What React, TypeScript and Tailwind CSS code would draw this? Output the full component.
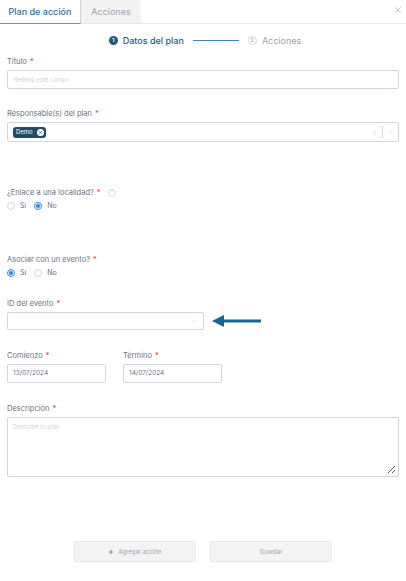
import { ChevronDown, X, Plus } from "lucide-react";

const font = { fontFamily: '"Inter", "Liberation Sans", sans-serif' };

function Label({ text, extra }: { text: string; extra?: React.ReactNode }) {
  return (
    <div className="flex items-center text-[7.5px] text-gray-500 mb-[3px] h-[10px]">
      <span>{text}</span>
      <span className="text-red-500 ml-[3px]">*</span>
      {extra}
    </div>
  );
}

function Radio({ label, checked }: { label: string; checked?: boolean }) {
  return (
    <label className="flex items-center gap-[5px] text-[7px] text-gray-500">
      <span
        className={
          "w-[8px] h-[8px] rounded-full flex items-center justify-center " +
          (checked ? "border border-[#3b8ee8] bg-[#e6f1fd]" : "border border-gray-300")
        }
      >
        {checked && <span className="w-[4px] h-[4px] rounded-full bg-[#2f86e6]" />}
      </span>
      {label}
    </label>
  );
}

export default function App() {
  return (
    <div className="w-[406px] h-[581px] bg-white relative overflow-hidden" style={font}>
      {/* tabs */}
      <div className="flex items-stretch h-[24px] border-b border-gray-200 relative">
        <div className="w-[81px] flex items-center justify-center text-[9px] font-medium text-[#2c6b93] border-r border-gray-300 border-b-[1.5px] border-b-[#5b9cc4] -mb-px">
          Plan de acción
        </div>
        <div className="w-[60px] flex items-center justify-center text-[9px] text-gray-400 bg-[#f3f3f3]">
          Acciones
        </div>
        <div className="flex-1" />
        <X className="w-[10px] h-[10px] text-gray-400 mt-[5px] mr-[3px]" strokeWidth={1.5} />
      </div>

      {/* stepper */}
      <div className="flex items-center justify-center h-[33px] pl-[4px]">
        <span className="w-[9px] h-[9px] rounded-full bg-[#1f5a80] text-white text-[5px] flex items-center justify-center font-bold">1</span>
        <span className="ml-[5px] text-[9px] text-[#1f5a80] font-medium">Datos del plan</span>
        <span className="w-[46px] h-px bg-[#3d86b3] mx-[9px]" />
        <span className="w-[9px] h-[9px] rounded-full border border-gray-300 text-gray-400 text-[5px] flex items-center justify-center">2</span>
        <span className="ml-[5px] text-[9px] text-gray-400">Acciones</span>
      </div>

      <div className="px-[7px]">
        <Label text="Título" />
        <div className="h-[19px] border border-gray-300 rounded-[2px] flex items-center px-[6px] text-[6px] text-gray-300">
          Rellena este campo
        </div>

        <div className="h-[20px]" />
        <Label text="Responsable(s) del plan" />
        <div className="h-[20px] border border-gray-300 rounded-[2px] flex items-center pl-[5px] pr-[3px]">
          <span className="flex items-center gap-[4px] bg-[#1f4d6b] rounded-[3px] pl-[3px] pr-[2px] h-[11px]">
            <span className="text-[6px] text-white leading-none">Demo</span>
            <span className="w-[7px] h-[7px] rounded-full bg-white flex items-center justify-center">
              <X className="w-[5px] h-[5px] text-[#1f4d6b]" strokeWidth={3} />
            </span>
          </span>
          <div className="flex-1" />
          <X className="w-[7px] h-[7px] text-gray-300" strokeWidth={2} />
          <span className="w-px h-[12px] bg-gray-300 mx-[4px]" />
          <ChevronDown className="w-[8px] h-[8px] text-gray-300" strokeWidth={2} />
        </div>

        <div className="h-[46px]" />
        <Label
          text="¿Enlace a una localidad?"
          extra={
            <span className="ml-[7px] w-[8px] h-[8px] rounded-full border border-gray-300 text-[5px] text-gray-300 flex items-center justify-center">?</span>
          }
        />
        <div className="flex items-center gap-[8px]">
          <Radio label="Sí" />
          <Radio label="No" checked />
        </div>

        <div className="h-[43px]" />
        <Label text="Asociar con un evento?" />
        <div className="flex items-center gap-[8px]">
          <Radio label="Sí" checked />
          <Radio label="No" />
        </div>

        <div className="h-[21px]" />
        <Label text="ID del evento" />
        <div className="flex items-center">
          <div className="w-[197px] h-[18px] border border-gray-300 rounded-[2px] flex items-center justify-end pr-[5px]">
            <ChevronDown className="w-[7px] h-[7px] text-gray-300" strokeWidth={2} />
          </div>
          <svg width="52" height="12" viewBox="0 0 52 12" className="ml-[8px]">
            <polygon points="0,6 12,0 12,12" fill="#1b6390" />
            <rect x="10" y="4.5" width="39" height="3" fill="#1b6390" />
          </svg>
        </div>

        <div className="h-[21px]" />
        <div className="flex gap-[17px]">
          <div>
            <Label text="Comienzo" />
            <div className="w-[99px] h-[19px] border border-gray-300 rounded-[2px] flex items-center px-[5px] text-[6.5px] text-gray-500">
              13/07/2024
            </div>
          </div>
          <div>
            <Label text="Término" />
            <div className="w-[99px] h-[19px] border border-gray-300 rounded-[2px] flex items-center px-[5px] text-[6.5px] text-gray-500">
              14/07/2024
            </div>
          </div>
        </div>

        <div className="h-[21px]" />
        <Label text="Descripción" />
        <div className="h-[60px] border border-gray-300 rounded-[2px] relative px-[5px] py-[4px] text-[6px] text-gray-300">
          Describe tu plan
          <svg width="9" height="9" viewBox="0 0 9 9" className="absolute right-[2px] bottom-[2px]">
            <line x1="1" y1="8" x2="8" y2="1" stroke="#555" strokeWidth="1" />
            <line x1="5" y1="8" x2="8" y2="5" stroke="#555" strokeWidth="1" />
          </svg>
        </div>
      </div>

      {/* footer buttons */}
      <div className="absolute left-0 right-0 top-[541px] flex justify-center gap-[14px]">
        <button className="w-[122px] h-[21px] bg-[#f4f4f4] border border-gray-200 rounded-[2px] flex items-center justify-center gap-[4px] text-[6px] text-gray-400">
          <Plus className="w-[6px] h-[6px] text-gray-500" strokeWidth={3} />
          Agregar acción
        </button>
        <button className="w-[122px] h-[21px] bg-[#f4f4f4] border border-gray-200 rounded-[2px] flex items-center justify-center text-[6px] text-gray-400">
          Guardar
        </button>
      </div>
    </div>
  );
}
